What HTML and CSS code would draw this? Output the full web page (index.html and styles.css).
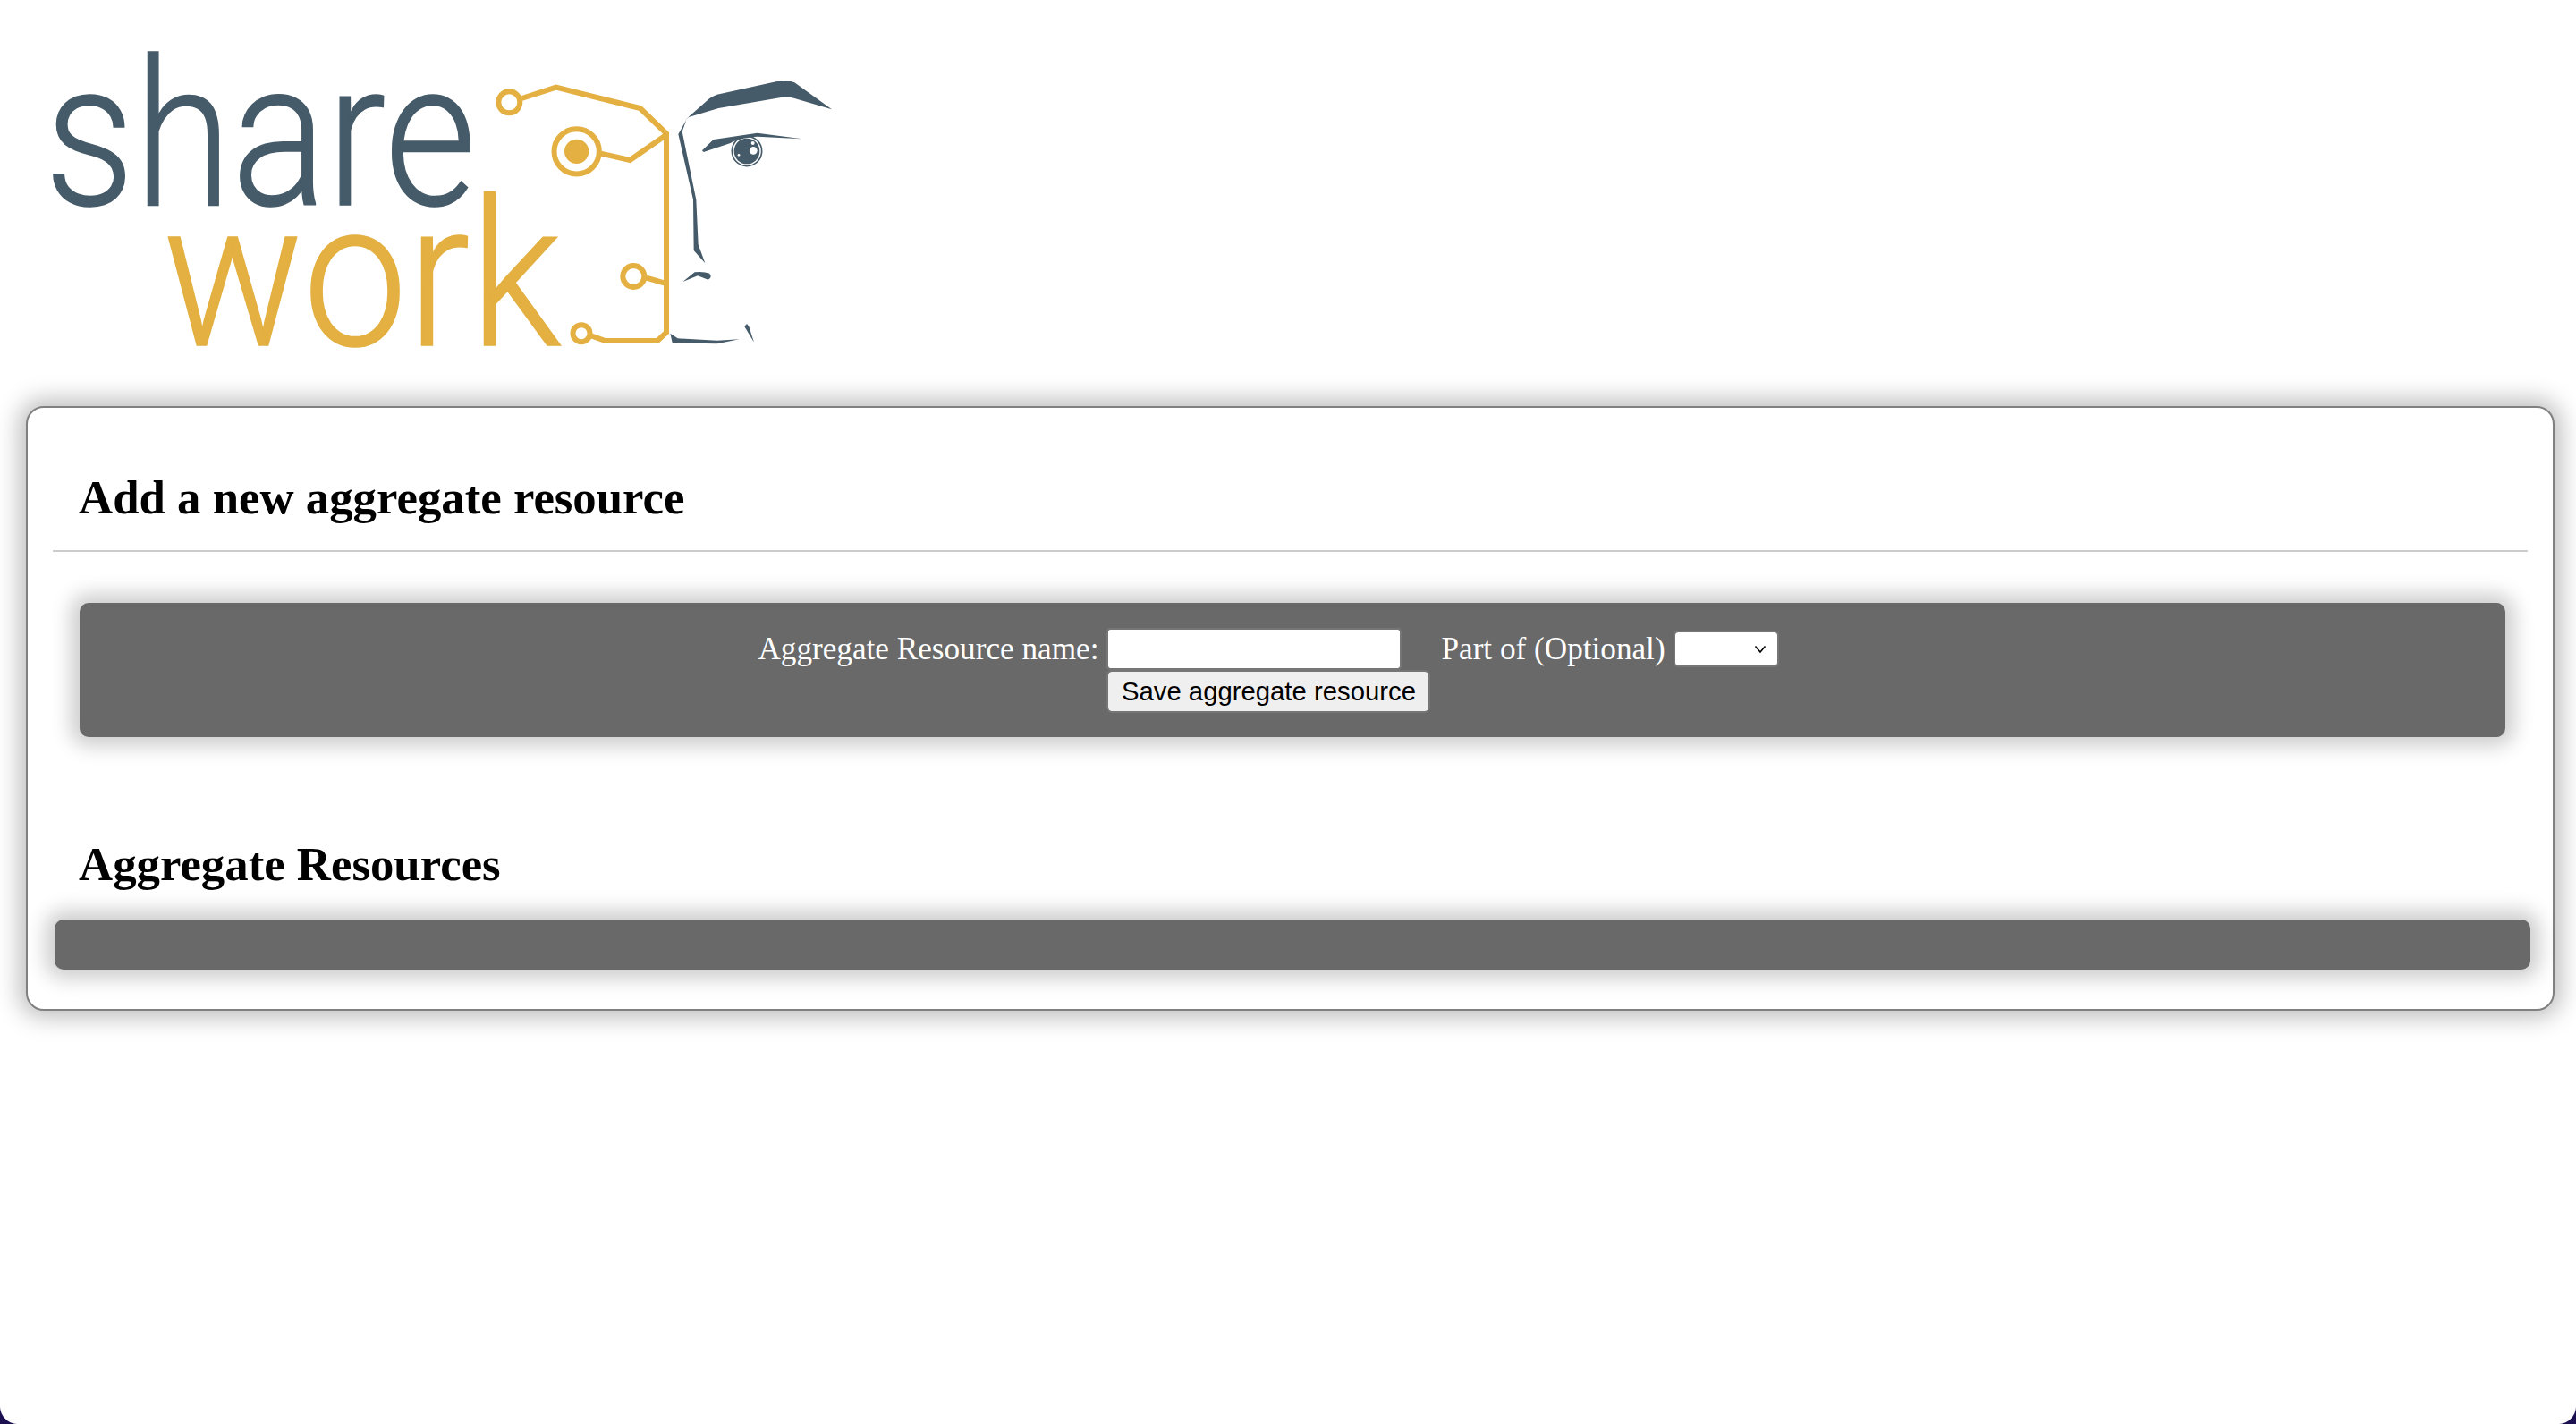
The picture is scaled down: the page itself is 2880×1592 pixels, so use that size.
FILE: index.html
```html
<!DOCTYPE html>
<html lang="en">
<head>
<meta charset="utf-8">
<title>Aggregate resources</title>
<link rel="stylesheet" href="styles.css">
</head>
<body>
<header class="masthead">
<svg class="logo" viewBox="0 0 960 420" width="960" height="420" role="img" aria-label="share work">
  <g transform="translate(50 229) scale(.868 1)"><text class="word word-share">share</text></g>
  <g transform="translate(182 386) scale(.912 1)"><text class="word word-work">work</text></g>
  <g transform="translate(530 60) scale(.33333)">
    <g class="circuit">
      <circle cx="118" cy="163" r="36"/>
      <path d="M160 150L275 113L557 183L645 268V935L615 963H440L390 945"/>
      <circle cx="360" cy="938" r="28.5"/>
      <circle cx="535" cy="747" r="36"/>
      <path d="M578 752L640 770"/>
      <circle cx="344" cy="328" r="75.5"/>
      <path d="M425 335L523 357L645 272"/>
    </g>
    <circle class="gold" cx="344" cy="328" r="41"/>
    <g class="face">
      <path d="M705 225L790 150Q800 142 815 137L1030 90Q1055 88 1075 97L1200 187L1075 150Q1050 143 1030 147L820 183L720 213Z"/>
      <path d="M712 222L685 270L735 490L737 660L775 703L752 640L745 490L698 262Z"/>
      <path d="M765 325L803 288L950 266L1100 286L950 278Q880 285 860 300L770 330Z"/>
      <path d="M700 765L740 733Q770 730 790 737Q800 750 785 758L750 745Z"/>
      <path d="M658 938L683 955L815 962L890 958L815 973L665 970Z"/>
      <path d="M907 915L915 906L922 915L939 968Z"/>
      <circle class="eye-ring" cx="915" cy="327" r="50"/>
      <circle cx="915" cy="327" r="43"/>
      <circle class="glint" cx="937" cy="325" r="13"/>
      <circle class="glint" cx="888" cy="340" r="4"/>
      <circle class="glint" cx="935" cy="300" r="6"/>
    </g>
  </g>
</svg>
</header>
<main class="card">
  <h2 class="title title-first">Add a new aggregate resource</h2>
  <hr class="rule">
  <form class="panel panel-form">
    <label class="lbl" for="name">Aggregate Resource name:</label>
    <input class="field" id="name" type="text">
    <label class="lbl lbl-part" for="part">Part of (Optional)</label>
    <select class="pick" id="part"><option></option></select>
    <button class="save" type="button">Save aggregate resource</button>
  </form>
  <h2 class="title title-second">Aggregate Resources</h2>
  <div class="panel panel-list"></div>
</main>
<div class="corner corner-l"></div>
<div class="corner corner-r"></div>
</body>
</html>
```
FILE: styles.css
```css
html, body { margin: 0; padding: 0; background: #fff; }
body {
  width: 2880px;
  height: 1592px;
  overflow: hidden;
  position: relative;
  font-family: "Liberation Serif", "Times New Roman", serif;
  color: #000;
}
.masthead { height: 454px; }
.logo { display: block; overflow: visible; }
.word { font-family: Roboto, sans-serif; font-weight: 300; font-size: 228px; stroke-width: 1.5px; }
.word-share { fill: #465b69; stroke: #465b69; }
.word-work { fill: #e3b041; stroke: #e3b041; }
.circuit { fill: none; stroke: #e3b041; stroke-width: 18; }
.gold { fill: #e3b041; }
.face { fill: #465b69; }
.eye-ring { fill: none; stroke: #465b69; stroke-width: 5; }
.glint { fill: #fff; }

.card {
  box-sizing: border-box;
  margin-left: 29px;
  width: 2827px;
  height: 676px;
  padding: 0 28px;
  background: #fff;
  border: 2px solid #808080;
  border-radius: 20px;
  box-shadow: 0 0 26px 8px rgba(0, 0, 0, .25);
}
.title { margin: 0 0 0 29px; font-size: 52.8px; line-height: 55px; font-weight: 700; }
.title-first { padding-top: 73px; }
.title-second { margin-top: 115px; }
.rule { height: 2px; margin: 31px 0 0; border: 0; background: #ccc; }
.panel {
  background: #696969;
  border-radius: 10px;
  box-shadow: 0 0 22px 10px rgba(0, 0, 0, .2);
}
.panel-form {
  box-sizing: border-box;
  height: 150px;
  margin: 57px 25px 0 30px;
  padding: 30px 56px 0 0;
  display: grid;
  grid-template-columns: auto 326px auto auto;
  grid-template-rows: 43px 44px;
  justify-content: center;
  align-items: center;
  row-gap: 4px;
}
.lbl { color: #fff; font-size: 35.2px; margin-right: 11px; }
.lbl-part { margin: 0 11px 0 46px; }
.field {
  box-sizing: border-box;
  width: 326px;
  height: 43px;
  padding: 0;
  border: 0;
  border-radius: 2px;
  background: #fff;
  outline: 2px solid #767676;
}
.pick {
  appearance: none;
  box-sizing: border-box;
  width: 114px;
  height: 37px;
  border: 0;
  border-radius: 3px;
  outline: 2px solid #767676;
  background: #fff url("data:image/svg+xml,%3Csvg xmlns='http://www.w3.org/2000/svg' width='14' height='10'%3E%3Cpath d='M1.5 1.5L7 8l5.500-6.500' fill='none' stroke='%23000' stroke-width='1.600'/%3E%3C/svg%3E") no-repeat right 12px center;
}
.save {
  grid-column: 2 / span 3;
  justify-self: start;
  box-sizing: border-box;
  width: 358px;
  height: 44px;
  padding: 0;
  border: 0;
  border-radius: 4px;
  background: #efefef;
  color: #000;
  font-family: "Liberation Sans", Arial, sans-serif;
  font-size: 29.3px;
  outline: 2px solid #767676;
}
.panel-list { height: 56px; margin: 34px -3px 0 2px; }
.corner { position: absolute; bottom: 0; width: 20px; height: 20px; }
.corner-l { left: 0; background: radial-gradient(circle at 100% 0, transparent 19.5px, #1c1050 20.5px); }
.corner-r { right: 0; background: radial-gradient(circle at 0 0, transparent 19.5px, #1c1050 20.5px); }
```
